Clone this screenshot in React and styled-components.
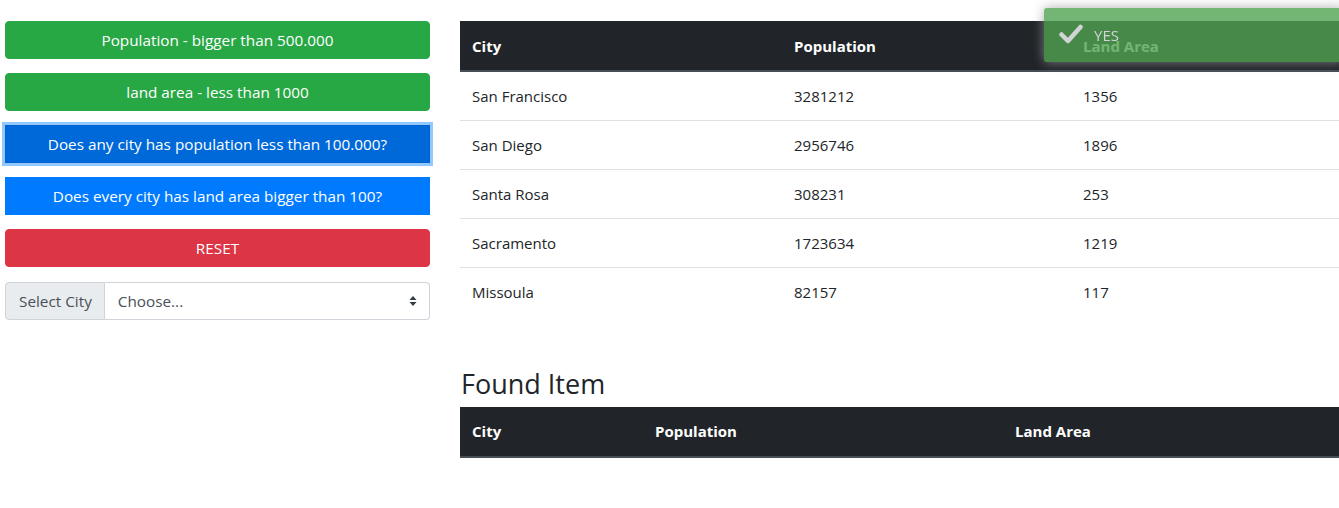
import React from "react";
import styled, { createGlobalStyle } from "styled-components";

const Global = createGlobalStyle`
  html, body { margin: 0; padding: 0; overflow: hidden; }
  body {
    font-family: "Open Sans", "Noto Sans", sans-serif;
    font-size: 15px;
    line-height: 1.6;
    color: #212529;
    background: #fff;
  }
  * { box-sizing: border-box; }
`;

const Page = styled.div`
  display: grid;
  grid-template-columns: 425px 900px;
  column-gap: 30px;
  padding: 21px 0 0 5px;
  width: 1400px;
`;

const Sidebar = styled.div`
  display: flex;
  flex-direction: column;
  gap: 14px;
`;

const colors = {
  success: { bg: "#28a745", border: "#28a745" },
  primary: { bg: "#007bff", border: "#007bff" },
  focused: { bg: "#0069d9", border: "#0062cc" },
  danger: { bg: "#dc3545", border: "#dc3545" },
};

const Button = styled.button`
  height: 38px;
  width: 100%;
  border-radius: ${(p) => (p.$variant === "primary" || p.$variant === "focused" ? "0" : "4px")};
  border: 1px solid ${(p) => colors[p.$variant].border};
  background: ${(p) => colors[p.$variant].bg};
  color: #fff;
  font-family: inherit;
  font-size: 15.3px;
  padding: 0 12px;
  cursor: pointer;
  box-shadow: ${(p) => (p.$variant === "focused" ? "0 0 0 3px rgba(38,143,255,.5)" : "none")};
`;

const InputGroup = styled.div`
  display: flex;
  height: 38px;
  margin-top: 1px;
`;

const Prepend = styled.span`
  display: flex;
  align-items: center;
  padding: 0 12px 0 13px;
  background: #e9ecef;
  border: 1px solid #ced4da;
  border-radius: 4px 0 0 4px;
  color: #495057;
  font-size: 15.3px;
`;

const SelectBox = styled.div`
  flex: 1;
  display: flex;
  align-items: center;
  justify-content: space-between;
  padding: 0 12px 0 13px;
  border: 1px solid #ced4da;
  border-left: none;
  border-radius: 0 4px 4px 0;
  color: #495057;
  font-size: 15.3px;
`;

const Main = styled.div`
  display: flex;
  flex-direction: column;
`;

const Table = styled.table`
  width: 900px;
  border-collapse: collapse;
  table-layout: fixed;
  margin-bottom: 16px;
`;

const Th = styled.th`
  background: #212529;
  color: #fff;
  text-align: left;
  font-weight: 700;
  padding: 12px;
  border-bottom: 2px solid #454d55;
  width: ${(p) => p.$w}px;
  height: 50px;
`;

const Td = styled.td`
  padding: 12px;
  border-top: ${(p) => (p.$first ? "none" : "1px solid #dee2e6")};
  height: ${(p) => (p.$first ? 48 : 49)}px;
`;

const Heading = styled.h3`
  margin: 35px 0 7px 1px;
  font-size: 27px;
  font-weight: 500;
  line-height: 1.2;
`;

const Toast = styled.div`
  position: fixed;
  left: 1044px;
  top: 8px;
  width: 300px;
  height: 54px;
  padding: 15px 15px 15px 50px;
  border-radius: 3px;
  background: #51a351;
  opacity: 0.8;
  box-shadow: 0 0 12px #999;
  color: #fff;
  font-size: 15px;
  line-height: 24px;
`;

const ToastIcon = styled.svg`
  position: absolute;
  left: 15px;
  top: 16px;
  width: 24px;
  height: 20px;
`;

const cities = [
  ["San Francisco", "3281212", "1356"],
  ["San Diego", "2956746", "1896"],
  ["Santa Rosa", "308231", "253"],
  ["Sacramento", "1723634", "1219"],
  ["Missoula", "82157", "117"],
];

export default function App() {
  return (
    <>
      <Global />
      <Page>
        <Sidebar>
          <Button $variant="success">Population - bigger than 500.000</Button>
          <Button $variant="success">land area - less than 1000</Button>
          <Button $variant="focused">Does any city has population less than 100.000?</Button>
          <Button $variant="primary">Does every city has land area bigger than 100?</Button>
          <Button $variant="danger">RESET</Button>
          <InputGroup>
            <Prepend>Select City</Prepend>
            <SelectBox>
              <span>Choose...</span>
              <svg width="8" height="12" viewBox="0 0 8 12">
                <path d="M4 1 L7.5 5 H0.5 Z M4 11 L7.5 7 H0.5 Z" fill="#343a40" />
              </svg>
            </SelectBox>
          </InputGroup>
        </Sidebar>
        <Main>
          <Table>
            <thead>
              <tr>
                <Th $w={322}>City</Th>
                <Th $w={289}>Population</Th>
                <Th $w={289}>Land Area</Th>
              </tr>
            </thead>
            <tbody>
              {cities.map((c, i) => (
                <tr key={c[0]}>
                  <Td $first={i === 0}>{c[0]}</Td>
                  <Td $first={i === 0}>{c[1]}</Td>
                  <Td $first={i === 0}>{c[2]}</Td>
                </tr>
              ))}
            </tbody>
          </Table>
          <Heading>Found Item</Heading>
          <Table>
            <thead>
              <tr>
                <Th $w={183}>City</Th>
                <Th $w={360}>Population</Th>
                <Th $w={357}>Land Area</Th>
              </tr>
            </thead>
          </Table>
        </Main>
      </Page>
      <Toast>
        <ToastIcon viewBox="0 0 24 20">
          <path d="M2.5 10.5 L9 17 L21.5 3" stroke="#fff" strokeWidth="4.5" fill="none" strokeLinecap="round" strokeLinejoin="round" />
        </ToastIcon>
        YES
      </Toast>
    </>
  );
}
